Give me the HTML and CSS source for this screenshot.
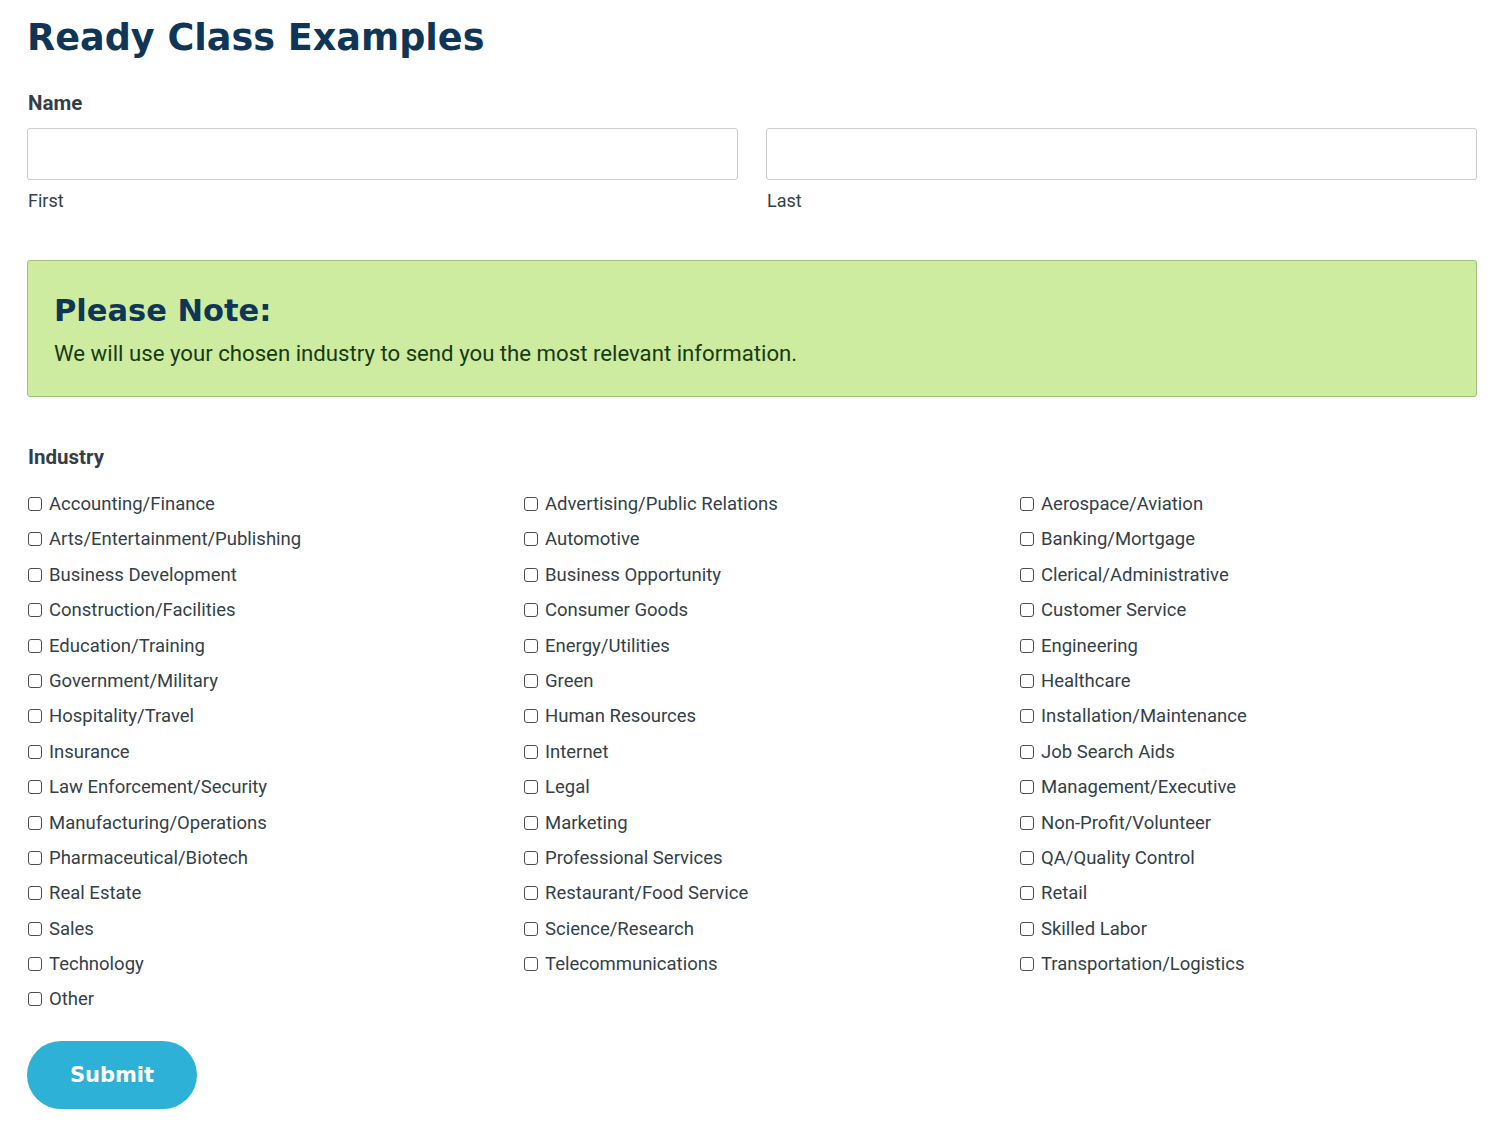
FILE: index.html
```html
<!DOCTYPE html>
<html lang="en">
<head>
<meta charset="utf-8">
<title>Ready Class Examples</title>
<link rel="stylesheet" href="styles.css">
</head>
<body>
<main class="page">
  <h1 class="title">Ready Class Examples</h1>
  <form class="form">
    <div class="field">
      <div class="field-label">Name</div>
      <div class="name-row">
        <div class="name-part">
          <input class="text-input" type="text" aria-label="First">
          <div class="sub-label">First</div>
        </div>
        <div class="name-part">
          <input class="text-input" type="text" aria-label="Last">
          <div class="sub-label">Last</div>
        </div>
      </div>
    </div>

    <div class="note">
      <h2 class="note-title">Please Note:</h2>
      <p class="note-text">We will use your chosen industry to send you the most relevant information.</p>
    </div>

    <div class="field industry">
      <div class="field-label">Industry</div>
      <div class="choices">
        <label class="choice"><input type="checkbox" class="box"><span>Accounting/Finance</span></label>
        <label class="choice"><input type="checkbox" class="box"><span>Advertising/Public Relations</span></label>
        <label class="choice"><input type="checkbox" class="box"><span>Aerospace/Aviation</span></label>
        <label class="choice"><input type="checkbox" class="box"><span>Arts/Entertainment/Publishing</span></label>
        <label class="choice"><input type="checkbox" class="box"><span>Automotive</span></label>
        <label class="choice"><input type="checkbox" class="box"><span>Banking/Mortgage</span></label>
        <label class="choice"><input type="checkbox" class="box"><span>Business Development</span></label>
        <label class="choice"><input type="checkbox" class="box"><span>Business Opportunity</span></label>
        <label class="choice"><input type="checkbox" class="box"><span>Clerical/Administrative</span></label>
        <label class="choice"><input type="checkbox" class="box"><span>Construction/Facilities</span></label>
        <label class="choice"><input type="checkbox" class="box"><span>Consumer Goods</span></label>
        <label class="choice"><input type="checkbox" class="box"><span>Customer Service</span></label>
        <label class="choice"><input type="checkbox" class="box"><span>Education/Training</span></label>
        <label class="choice"><input type="checkbox" class="box"><span>Energy/Utilities</span></label>
        <label class="choice"><input type="checkbox" class="box"><span>Engineering</span></label>
        <label class="choice"><input type="checkbox" class="box"><span>Government/Military</span></label>
        <label class="choice"><input type="checkbox" class="box"><span>Green</span></label>
        <label class="choice"><input type="checkbox" class="box"><span>Healthcare</span></label>
        <label class="choice"><input type="checkbox" class="box"><span>Hospitality/Travel</span></label>
        <label class="choice"><input type="checkbox" class="box"><span>Human Resources</span></label>
        <label class="choice"><input type="checkbox" class="box"><span>Installation/Maintenance</span></label>
        <label class="choice"><input type="checkbox" class="box"><span>Insurance</span></label>
        <label class="choice"><input type="checkbox" class="box"><span>Internet</span></label>
        <label class="choice"><input type="checkbox" class="box"><span>Job Search Aids</span></label>
        <label class="choice"><input type="checkbox" class="box"><span>Law Enforcement/Security</span></label>
        <label class="choice"><input type="checkbox" class="box"><span>Legal</span></label>
        <label class="choice"><input type="checkbox" class="box"><span>Management/Executive</span></label>
        <label class="choice"><input type="checkbox" class="box"><span>Manufacturing/Operations</span></label>
        <label class="choice"><input type="checkbox" class="box"><span>Marketing</span></label>
        <label class="choice"><input type="checkbox" class="box"><span>Non-Profit/Volunteer</span></label>
        <label class="choice"><input type="checkbox" class="box"><span>Pharmaceutical/Biotech</span></label>
        <label class="choice"><input type="checkbox" class="box"><span>Professional Services</span></label>
        <label class="choice"><input type="checkbox" class="box"><span>QA/Quality Control</span></label>
        <label class="choice"><input type="checkbox" class="box"><span>Real Estate</span></label>
        <label class="choice"><input type="checkbox" class="box"><span>Restaurant/Food Service</span></label>
        <label class="choice"><input type="checkbox" class="box"><span>Retail</span></label>
        <label class="choice"><input type="checkbox" class="box"><span>Sales</span></label>
        <label class="choice"><input type="checkbox" class="box"><span>Science/Research</span></label>
        <label class="choice"><input type="checkbox" class="box"><span>Skilled Labor</span></label>
        <label class="choice"><input type="checkbox" class="box"><span>Technology</span></label>
        <label class="choice"><input type="checkbox" class="box"><span>Telecommunications</span></label>
        <label class="choice"><input type="checkbox" class="box"><span>Transportation/Logistics</span></label>
        <label class="choice"><input type="checkbox" class="box"><span>Other</span></label>
      </div>
    </div>

    <button type="button" class="submit">Submit</button>
  </form>
</main>
</body>
</html>
```

FILE: styles.css
```css
* { box-sizing: border-box; }

html, body {
  margin: 0;
  padding: 0;
  background: #ffffff;
}

body {
  font-family: Roboto, "Liberation Sans", Arial, sans-serif;
  color: #333f48;
}

.page {
  padding: 14px 23px 0 27px;
}

.title {
  margin: 0;
  font-family: "DejaVu Sans", "Liberation Sans", sans-serif;
  font-weight: 700;
  font-size: 36.6px;
  line-height: 48px;
  color: #0f3656;
  letter-spacing: 0;
}

.form {
  margin-top: 29px;
}

.field-label {
  font-size: 20.5px;
  font-weight: 700;
  line-height: 24px;
  color: #333f48;
  padding-left: 1px;
}

.name-row {
  display: flex;
  gap: 28px;
  margin-top: 13px;
}

.name-part {
  flex: 1;
}

.text-input {
  display: block;
  width: 100%;
  height: 52px;
  border: 1px solid #c9cdd0;
  border-radius: 3px;
  background: #fff;
  font-size: 18px;
  padding: 0 12px;
}

.sub-label {
  margin-top: 10px;
  font-size: 18px;
  line-height: 22px;
  color: #333f48;
  padding-left: 1px;
}

.note {
  margin-top: 48px;
  background: #cdeca0;
  border: 1px solid #9fc27f;
  border-radius: 3px;
  padding: 30px 26px 29px;
}

.note-title {
  margin: 0;
  font-family: "DejaVu Sans", "Liberation Sans", sans-serif;
  font-weight: 700;
  font-size: 30.5px;
  line-height: 40px;
  color: #0f3656;
}

.note-text {
  margin: 8px 0 0;
  font-size: 22.2px;
  line-height: 28px;
  color: #173a14;
}

.industry {
  margin-top: 48px;
}

.choices {
  display: grid;
  grid-template-columns: repeat(3, 496px);
  grid-auto-rows: 35.4px;
  margin-top: 24px;
}

.choice {
  display: flex;
  align-items: center;
  gap: 7px;
  font-size: 18.5px;
  line-height: 22px;
  color: #333f48;
  height: 22px;
}

.box {
  appearance: none;
  -webkit-appearance: none;
  margin: 0 0 0 1px;
  width: 14px;
  height: 14px;
  border: 1px solid #4a4f54;
  border-radius: 3px;
  background: #fff;
  flex: none;
}

.submit {
  margin-top: 17px;
  width: 170px;
  height: 68px;
  border: none;
  border-radius: 34px;
  background: #2eb1d6;
  color: #ffffff;
  font-family: "DejaVu Sans", "Liberation Sans", sans-serif;
  font-weight: 700;
  font-size: 21px;
}
```
